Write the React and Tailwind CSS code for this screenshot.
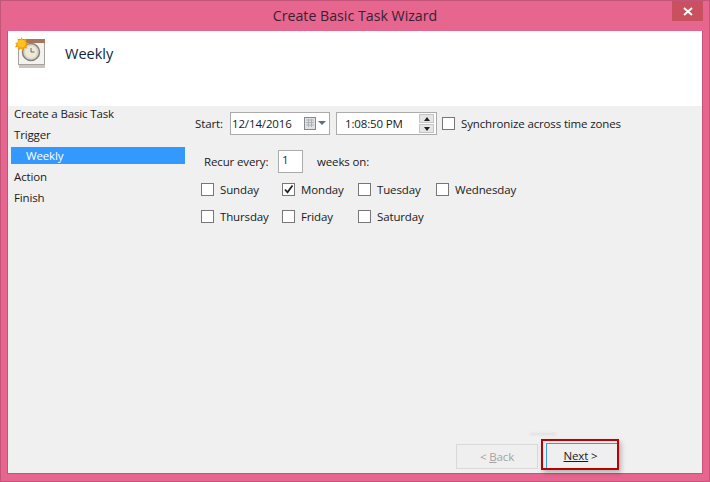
const font = { fontFamily: '"Open Sans", "Noto Sans", sans-serif' };

function TaskIcon() {
  return (
    <svg width="32" height="32" viewBox="0 0 32 32" className="block">
      <rect x="4" y="27" width="26" height="4" fill="#c9c5c0" />
      <rect x="3.500" y="2.500" width="26" height="25" fill="#f4f2ee" stroke="#a9a29a" />
      <rect x="3" y="2" width="27" height="4" fill="#a5755c" />
      <circle cx="16" cy="15" r="8.500" fill="#d9d5ca" stroke="#85827c" strokeWidth="1.500" />
      <circle cx="16" cy="15" r="6" fill="#efe9d8" />
      <path d="M16 11v4h3.500" fill="none" stroke="#666" strokeWidth="1" />
      <path d="M6.500 0l1.500 3 3.500-1.500-.5 3.500 3 1.500-3 2 1.500 3-3.500-.5-1 3-2-2.500-2.500 2-.5-3.500-3 .5 1.500-3L0 6.500l3-1.500-.5-3.500 3 1.500z" fill="#f5a000" />
      <circle cx="6.500" cy="6.500" r="4" fill="#fcc21f" />
    </svg>
  );
}

function CalendarIcon() {
  return (
    <svg width="24" height="13" viewBox="0 0 24 13" className="block">
      <rect x="0.500" y="0.500" width="11" height="12" fill="#dfe1e3" stroke="#85898e" />
      <path d="M2 3h8M2 5.500h8M2 8h8M4.500 2v8M7.500 2v8" stroke="#a4a8ad" strokeWidth="0.800" />
      <path d="M14 4h8l-4 4z" fill="#5e6f80" />
    </svg>
  );
}

function Check({ label, checked, className = "" }) {
  return (
    <div className={`flex items-center gap-[6px] ${className}`}>
      <span className="w-[13px] h-[13px] bg-white border border-[#777] shrink-0 flex items-center justify-center">
        {checked && (
          <svg width="11" height="11" viewBox="0 0 11 11">
            <path d="M2 5.500l2.500 2.800L9.500 1.500" fill="none" stroke="#222" strokeWidth="1.800" />
          </svg>
        )}
      </span>
      <span>{label}</span>
    </div>
  );
}

export default function App() {
  return (
    <div
      style={font}
      className="w-[710px] h-[482px] bg-[#e7668f] border border-[#c4557a] flex flex-col overflow-hidden text-[11.500px] tracking-[-0.14px] text-[#1a1a1a]"
    >
      <div className="h-[30px] shrink-0 flex relative">
        <div className="flex-1 text-center text-[14.200px] tracking-normal leading-[30px] text-[#3a2030]">
          Create Basic Task Wizard
        </div>
        <div className="absolute right-[6px] top-0 w-[31px] h-[20px] bg-[#c9505f] flex items-center justify-center">
          <svg width="10" height="9" viewBox="0 0 10 9">
            <path d="M1 1l8 7M9 1L1 8" stroke="#fff" strokeWidth="2" />
          </svg>
        </div>
      </div>

      <div className="flex-1 mx-[6px] mb-[7px] bg-[#f0f0f0] flex flex-col border border-[#c4557a] border-t-0 min-h-0">
        <div className="h-[75px] bg-white shrink-0 flex items-start pl-[7px] pt-[6px]">
          <TaskIcon />
          <span className="ml-[18px] mt-[7px] text-[14.500px] tracking-normal leading-[20px] text-[#10263f]">Weekly</span>
        </div>

        <div className="flex flex-1 min-h-0">
          <div className="w-[177px] shrink-0 pl-[3px] leading-[21px] -mt-[3px]">
            <div className="pl-[3px]">Create a Basic Task</div>
            <div className="pl-[3px]">Trigger</div>
            <div className="bg-[#3399ff] text-white pl-[15px] h-[17px] leading-[17px] my-[2px]">Weekly</div>
            <div className="pl-[3px]">Action</div>
            <div className="pl-[3px]">Finish</div>
          </div>

          <div className="flex-1 flex flex-col pl-[10px] relative">
            <div className="flex items-center mt-[6px] h-[23px]">
              <span className="w-[35px]">Start:</span>
              <div className="w-[100px] h-[23px] bg-white border border-[#ababab] flex items-center justify-between pl-[1px] pr-[1px]">
                <span>12/14/2016</span>
                <CalendarIcon />
              </div>
              <div className="w-[101px] h-[23px] ml-[6px] bg-white border border-[#ababab] flex items-center justify-between pl-[8px] pr-[2px]">
                <span>1:08:50 PM</span>
                <div className="flex flex-col gap-[1px]">
                  <span className="w-[15px] h-[9px] bg-[#e6e6e6] border border-[#c4c4c4] flex items-center justify-center">
                    <span className="border-x-[3px] border-x-transparent border-b-[4px] border-b-[#222]" />
                  </span>
                  <span className="w-[15px] h-[9px] bg-[#e6e6e6] border border-[#c4c4c4] flex items-center justify-center">
                    <span className="border-x-[3px] border-x-transparent border-t-[4px] border-t-[#222]" />
                  </span>
                </div>
              </div>
              <Check label="Synchronize across time zones" className="ml-[5px]" />
            </div>

            <div className="flex items-center mt-[15px] ml-[9px] h-[23px]">
              <span className="w-[74px]">Recur every:</span>
              <div className="w-[25px] h-[23px] bg-white border border-[#ababab] pl-[3px] leading-[18px] text-[#2a1a5e]">1</div>
              <span className="ml-[14px]">weeks on:</span>
            </div>

            <div className="grid grid-cols-[81px_76px_78px_auto] mt-[8px] ml-[6px] gap-y-[10px] leading-[17px]">
              <Check label="Sunday" />
              <Check label="Monday" checked />
              <Check label="Tuesday" />
              <Check label="Wednesday" />
              <Check label="Thursday" />
              <Check label="Friday" />
              <Check label="Saturday" />
            </div>

            <div className="mt-auto mb-[3px] flex justify-end pr-[83px] items-end relative">
              <div className="w-[82px] h-[25px] mb-[1px] border border-[#d9d9d9] bg-[#efefef] text-[#a3a3a3] flex items-center justify-center">
                <span>&lt; <u>B</u>ack</span>
              </div>
              <div className="w-[78px] h-[31px] ml-[3px] border-[2px] border-[#c00000] bg-[#efefef] shadow-[2px_3px_5px_rgba(0,0,0,0.25)] flex">
                <div className="flex-1 ml-[3px] mt-[2px] pr-[3px] border-l border-t border-[#3c9ae8] flex items-center justify-center">
                  <span><u>Next</u> &gt;</span>
                </div>
              </div>
              <div className="absolute right-[146px] -top-[6px] w-[26px] h-[2px] bg-[#dedede] blur-[1px]" />
            </div>
          </div>
        </div>
      </div>
    </div>
  );
}
